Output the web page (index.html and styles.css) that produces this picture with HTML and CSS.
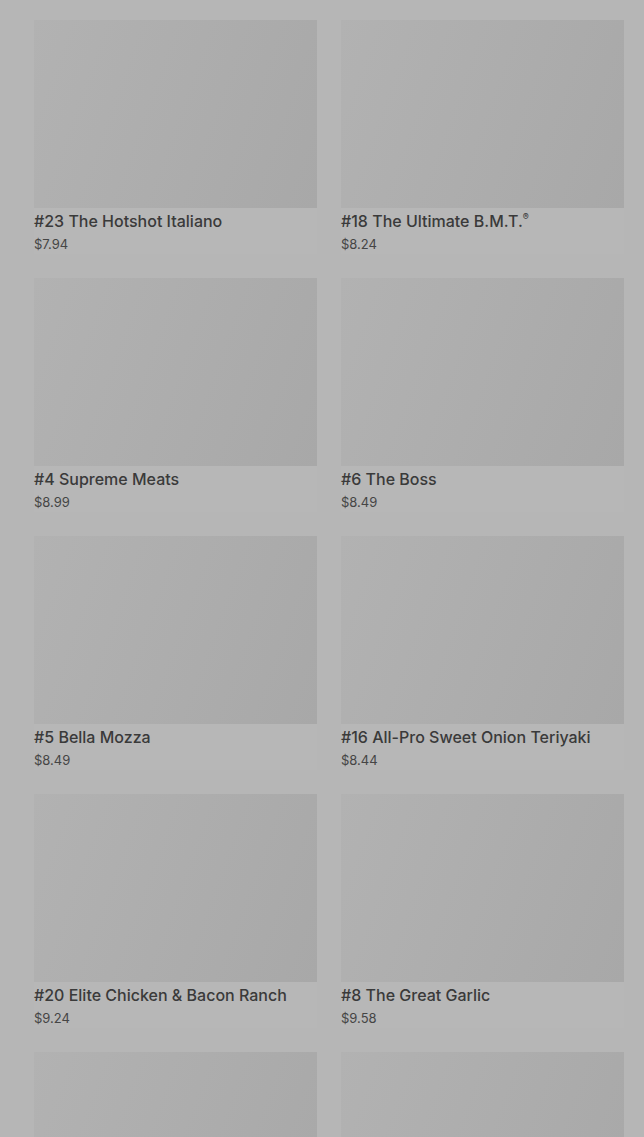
FILE: index.html
```html
<!DOCTYPE html>
<html lang="en">
<head>
  <meta charset="UTF-8" />
  <meta name="viewport" content="width=device-width, initial-scale=1.0"/>
  <title>Menu</title>

  <link rel="stylesheet" href="styles.css">
</head>
<body>
  <div class="menu-grid">
    <div class="item">
      <div class="item-image"></div>
      <h3>#23 The Hotshot Italiano</h3>
      <p class="price">$7.94</p>
    </div>
    <div class="item">
      <div class="item-image"></div>
      <h3>#18 The Ultimate B.M.T.<sup>®</sup></h3>
      <p class="price">$8.24</p>
    </div>
    <div class="item">
      <div class="item-image"></div>
      <h3>#4 Supreme Meats</h3>
      <p class="price">$8.99</p>
    </div>
    <div class="item">
      <div class="item-image"></div>
      <h3>#6 The Boss</h3>
      <p class="price">$8.49</p>
    </div>
    <div class="item">
      <div class="item-image"></div>
      <h3>#5 Bella Mozza</h3>
      <p class="price">$8.49</p>
    </div>
    <div class="item">
      <div class="item-image"></div>
      <h3>#16 All-Pro Sweet Onion Teriyaki</h3>
      <p class="price">$8.44</p>
    </div>
    <div class="item">
      <div class="item-image"></div>
      <h3>#20 Elite Chicken &amp; Bacon Ranch</h3>
      <p class="price">$9.24</p>
    </div>
    <div class="item">
      <div class="item-image"></div>
      <h3>#8 The Great Garlic</h3>
      <p class="price">$9.58</p>
    </div>
    <!-- next row is still loading -->
    <div class="item">
      <div class="item-image"></div>
    </div>
    <div class="item">
      <div class="item-image"></div>
    </div>
  </div>
</body>
</html>
```

FILE: styles.css
```css
/* Reset & Base Styles */
* {
  box-sizing: border-box;
  margin: 0;
  padding: 0;
}

body {
  font-family: Inter, Roboto, 'Noto Sans', sans-serif;
  background: #b6b6b6;
  color: #3a3a3a;
  overflow: hidden;
}

.menu-grid {
  display: grid;
  grid-template-columns: 283px 283px;
  column-gap: 24px;
  row-gap: 24px;
  padding: 20px 20px 0 34px;
}

.item {
  background: #b7b7b7;
}

.item-image {
  height: 188px;
  background: linear-gradient(110deg, #b2b2b2 0%, #adadad 50%, #a8a8a8 100%);
}

.item h3 {
  font-size: 16px;
  font-weight: 500;
  line-height: 20px;
  margin-top: 3px;
  color: #3a3a3a;
}

.item h3 sup {
  font-size: 9px;
  vertical-align: top;
  line-height: 12px;
}

.price {
  font-size: 13px;
  line-height: 20px;
  margin-top: 3px;
  color: #454545;
}
```
